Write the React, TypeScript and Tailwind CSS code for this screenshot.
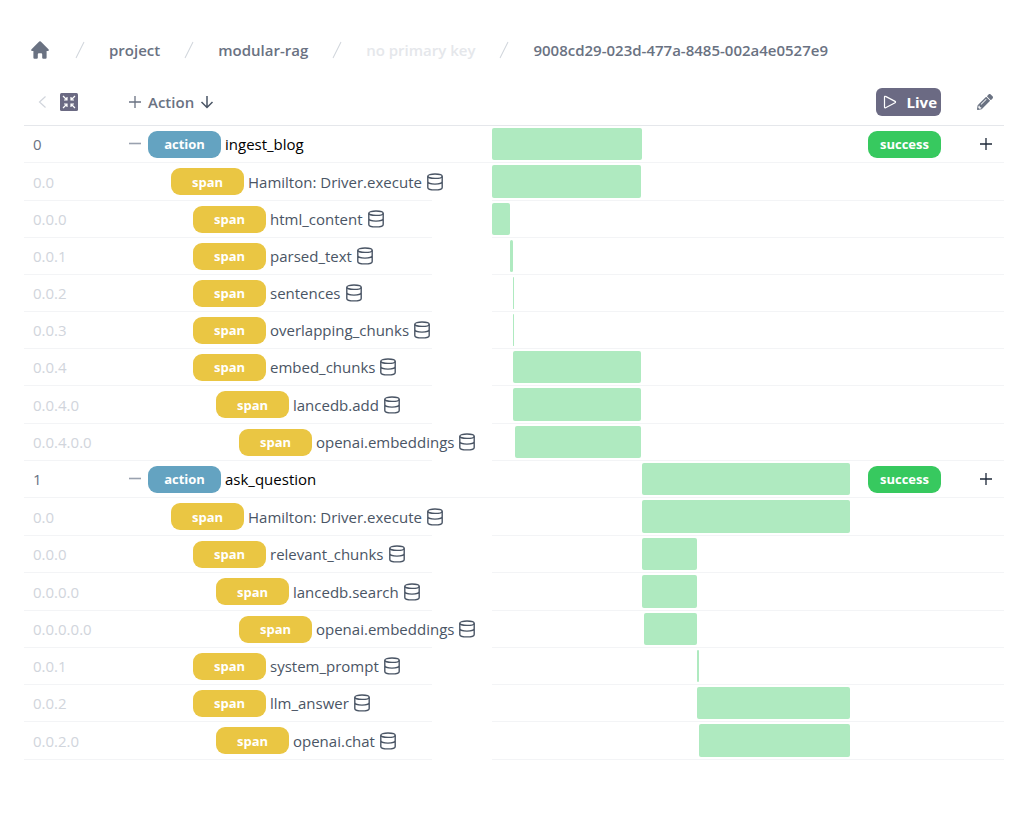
import React from "react";

type Row = { id: string; depth: number; name: string; start: number; size: number };

const SPAN = 358;

const rows: Row[] = [
  { id: "0", depth: 0, name: "ingest_blog", start: 0, size: 150 },
  { id: "0.0", depth: 1, name: "Hamilton: Driver.execute", start: 0, size: 149 },
  { id: "0.0.0", depth: 2, name: "html_content", start: 0, size: 18 },
  { id: "0.0.1", depth: 2, name: "parsed_text", start: 18, size: 3 },
  { id: "0.0.2", depth: 2, name: "sentences", start: 21, size: 1 },
  { id: "0.0.3", depth: 2, name: "overlapping_chunks", start: 21, size: 1 },
  { id: "0.0.4", depth: 2, name: "embed_chunks", start: 21, size: 128 },
  { id: "0.0.4.0", depth: 3, name: "lancedb.add", start: 21, size: 128 },
  { id: "0.0.4.0.0", depth: 4, name: "openai.embeddings", start: 23, size: 126 },
  { id: "1", depth: 0, name: "ask_question", start: 150, size: 208 },
  { id: "0.0", depth: 1, name: "Hamilton: Driver.execute", start: 150, size: 208 },
  { id: "0.0.0", depth: 2, name: "relevant_chunks", start: 150, size: 55 },
  { id: "0.0.0.0", depth: 3, name: "lancedb.search", start: 150, size: 55 },
  { id: "0.0.0.0.0", depth: 4, name: "openai.embeddings", start: 152, size: 53 },
  { id: "0.0.1", depth: 2, name: "system_prompt", start: 205, size: 2 },
  { id: "0.0.2", depth: 2, name: "llm_answer", start: 205, size: 153 },
  { id: "0.0.2.0", depth: 3, name: "openai.chat", start: 207, size: 151 },
];

const indents = ["pl-5", "pl-[63px]", "pl-[85px]", "pl-[108px]", "pl-[131px]"];

function HomeIcon() {
  return (
    <svg viewBox="0 0 20 20" fill="currentColor" className="size-[22px]" aria-hidden="true">
      <path
        fillRule="evenodd"
        clipRule="evenodd"
        d="M9.293 2.293a1 1 0 011.414 0l7 7A1 1 0 0117 11h-1v6a1 1 0 01-1 1h-2a1 1 0 01-1-1v-3a1 1 0 00-1-1H9a1 1 0 00-1 1v3a1 1 0 01-1 1H5a1 1 0 01-1-1v-6H3a1 1 0 01-.707-1.707l7-7z"
      />
    </svg>
  );
}

function Slash() {
  return (
    <svg viewBox="0 0 20 20" fill="currentColor" className="size-5 shrink-0 text-gray-300" aria-hidden="true">
      <path d="M5.555 17.776l8-16 .894.448-8 16-.894-.448z" />
    </svg>
  );
}

function PlusIcon() {
  return (
    <svg viewBox="0 0 16 16" stroke="currentColor" strokeWidth="1.3" className="size-4" aria-hidden="true">
      <path d="M8 2v12M2 8h12" />
    </svg>
  );
}

function MinusIcon() {
  return (
    <svg viewBox="0 0 16 16" stroke="currentColor" strokeWidth="1.6" className="size-4" aria-hidden="true">
      <path d="M1 7.5h12" />
    </svg>
  );
}

function DatabaseIcon() {
  return (
    <svg viewBox="0 0 18 18" fill="none" stroke="currentColor" strokeWidth="1.4" className="size-[18px] shrink-0" aria-hidden="true">
      <ellipse cx="9" cy="3.2" rx="7.2" ry="2.2" />
      <path d="M1.800 3.200v11.200c0 1.500 2.200 2.500 7.200 2.500s7.200-1 7.200-2.500V3.200M1.800 8.600c0 1.500 2.200 2.500 7.200 2.500s7.200-1 7.200-2.500" />
    </svg>
  );
}

function CollapseIcon() {
  return (
    <svg viewBox="0 0 18 18" className="size-[18px]" aria-hidden="true">
      <rect width="18" height="18" rx="1.500" fill="#6b6a83" />
      <path
        d="M3 3l4 4M7 4v3H4M15 3l-4 4M11 4v3h3M3 15l4-4M7 14v-3H4M15 15l-4-4M11 14v-3h3"
        fill="none"
        stroke="#fff"
        strokeWidth="1.200"
      />
    </svg>
  );
}

function TraceRow({ row }: { row: Row }) {
  const action = row.depth === 0;
  const line = "border-b border-gray-100 p-0";
  return (
    <tr className={row.depth % 2 === 1 ? "h-[38px]" : "h-[37px]"}>
      <td className={`${line} pl-[9px] ${action ? "text-gray-500" : "text-gray-300"}`}>{row.id}</td>
      <td className={`${line} ${indents[row.depth]} whitespace-nowrap`}>
        <div className={`flex items-center gap-1 ${action ? "text-black" : "text-gray-600"}`}>
          {action && (
            <button className="text-gray-400" aria-label={`Collapse ${row.name}`}>
              <MinusIcon />
            </button>
          )}
          <span
            className={`flex h-[27px] w-[73px] shrink-0 items-center justify-center rounded-[9px] text-[13px] font-bold text-white ${
              action ? "bg-[#64a3c1]" : "bg-[#eac643]"
            }`}
          >
            {action ? "action" : "span"}
          </span>
          <span>{row.name}</span>
          {!action && <DatabaseIcon />}
        </div>
      </td>
      <td className={action ? line : "p-0"} />
      <td className={`${line} pt-[2px] align-top`}>
        <div
          className={`rounded-xs bg-[#afeac0] ${row.depth % 2 === 1 ? "h-[33px]" : "h-8"}`}
          style={{ marginLeft: `${(row.start / SPAN) * 100}%`, width: `${(row.size / SPAN) * 100}%` }}
        />
      </td>
      <td className={`${line} pl-[18px]`}>
        {action && (
          <span className="flex h-[27px] w-[73px] items-center justify-center rounded-[9px] bg-[#37c95f] text-[13px] font-bold text-white">
            success
          </span>
        )}
      </td>
      <td className={`${line} pl-7`}>
        {action && (
          <button className="block text-gray-800" aria-label={`Expand details of ${row.name}`}>
            <PlusIcon />
          </button>
        )}
      </td>
    </tr>
  );
}

export default function App() {
  return (
    <main className="min-h-screen bg-white pt-10 pr-[25px] pb-17 pl-6 font-['Open_Sans','Noto_Sans',sans-serif] text-[15px] leading-5">
      <nav aria-label="Breadcrumb" className="flex h-5 items-center gap-[19px] pl-[5px] font-semibold text-gray-500">
        <a href="#home" aria-label="Home">
          <HomeIcon />
        </a>
        <Slash />
        <a href="#project">project</a>
        <Slash />
        <a href="#modular-rag">modular-rag</a>
        <Slash />
        <span className="text-gray-200">no primary key</span>
        <Slash />
        <a href="#run">9008cd29-023d-477a-8485-002a4e0527e9</a>
      </nav>

      <table className="mt-[18px] w-full table-fixed border-separate border-spacing-0 text-left">
        <colgroup>
          <col className="w-[84px]" />
          <col className="w-[324px]" />
          <col className="w-[60px]" />
          <col />
          <col className="w-[100px]" />
          <col className="w-[54px]" />
        </colgroup>
        <thead>
          <tr className="h-12">
            <th className="border-b border-gray-200 p-0">
              <div className="flex items-center gap-[10px] pl-[10px]">
                <button className="text-gray-300" aria-label="Back">
                  <svg viewBox="0 0 16 16" fill="none" stroke="currentColor" strokeWidth="1.200" className="size-4">
                    <path d="M11.500 2.500L5.500 8l6 5.500" />
                  </svg>
                </button>
                <button aria-label="Collapse all">
                  <CollapseIcon />
                </button>
              </div>
            </th>
            <th className="border-b border-gray-200 p-0">
              <div className="flex items-center gap-[5px] pl-[19px] font-semibold text-gray-500">
                <button aria-label="Expand all">
                  <PlusIcon />
                </button>
                Action
                <button className="text-gray-600" aria-label="Sort">
                  <svg viewBox="0 0 16 16" fill="none" stroke="currentColor" strokeWidth="1.500" className="size-4">
                    <path d="M8 2v11.500M2.500 8L8 13.500 13.500 8" />
                  </svg>
                </button>
              </div>
            </th>
            <th className="border-b border-gray-200 p-0" />
            <th className="border-b border-gray-200 p-0" />
            <th className="border-b border-gray-200 p-0 pl-[26px]">
              <button className="flex h-7 w-[65px] items-center justify-between rounded-md bg-[#6b6a83] pr-1 pl-[6px] font-bold text-white">
                <svg viewBox="0 0 16 16" fill="none" stroke="currentColor" strokeWidth="1.200" className="size-4">
                  <path d="M2.500 3v10c0 .7.500 1 1.100.7l9.500-5c.6-.3.6-1 0-1.300l-9.500-5c-.6-.4-1.100 0-1.100.6z" />
                </svg>
                Live
              </button>
            </th>
            <th className="border-b border-gray-200 p-0 pl-[27px]">
              <button className="block text-gray-500" aria-label="Edit">
                <svg viewBox="0 0 512 512" fill="currentColor" className="size-4">
                  <path d="M497.900 142.100l-46.100 46.100c-4.700 4.700-12.300 4.700-17 0l-111-111c-4.700-4.700-4.700-12.300 0-17l46.100-46.100c18.700-18.700 49.100-18.700 67.900 0l60.100 60.100c18.800 18.700 18.800 49.100 0 67.900zM284.200 99.800L21.600 362.400.4 483.900c-2.900 16.400 11.400 30.600 27.800 27.800l121.500-21.300 262.600-262.600c4.700-4.700 4.700-12.300 0-17l-111-111c-4.800-4.700-12.400-4.700-17.100 0zM124.100 339.900c-5.500-5.500-5.500-14.300 0-19.800l154-154c5.500-5.500 14.300-5.500 19.800 0s5.500 14.300 0 19.800l-154 154c-5.500 5.500-14.300 5.500-19.800 0zM88 424h48v36.300l-64.500 11.300-31.100-31.100L51.700 376H88v48z" />
                </svg>
              </button>
            </th>
          </tr>
        </thead>
        <tbody>
          {rows.map((row, i) => (
            <TraceRow key={i} row={row} />
          ))}
        </tbody>
      </table>
    </main>
  );
}
